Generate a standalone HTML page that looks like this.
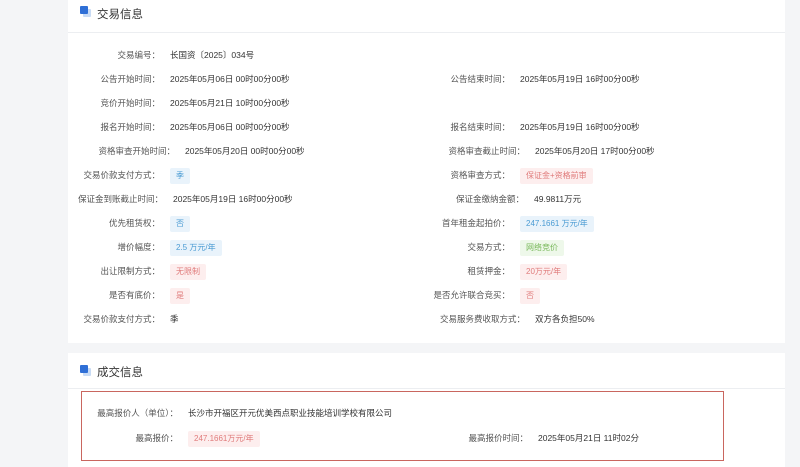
<!DOCTYPE html>
<html><head><meta charset="utf-8"><style>
body{margin:0;width:800px;height:467px;background:#f4f5f7;position:relative;overflow:hidden;font-family:"Liberation Sans","Noto Sans CJK SC",sans-serif;font-size:8.5px;color:#333}
.card{position:absolute;left:68px;width:717px;background:#fff}
.hd{position:absolute;left:0;right:0;border-bottom:1px solid #eceef1}
.ic{position:absolute;width:8px;height:8px;background:#2f6fd6;border-radius:1px;box-shadow:3px 3px 0 #c8dbf5}
.tt{position:absolute;font-size:11.5px;color:#333}
.l,.v{position:absolute;line-height:16px;white-space:nowrap}
.l{text-align:right;color:#555}
.tag{display:inline-block;padding:0 6px;line-height:16px;border-radius:2px;font-size:8px}
.b{background:#e9f3fb;color:#4a9bd3}.r{background:#fdeeee;color:#e07b7b}.g{background:#eef8ea;color:#78b85a}
</style></head><body>
<div class="card" style="top:0;height:343px">
<div class="hd" style="top:0;height:32px"></div>
<div class="ic" style="left:12px;top:6px"></div>
<div class="tt" style="left:29px;top:6px">交易信息</div>
</div>
<div class="card" style="top:353px;height:114px">
<div class="hd" style="top:0;height:35px"></div>
<div class="ic" style="left:12px;top:12px"></div>
<div class="tt" style="left:29px;top:11px">成交信息</div>
</div>
<div style="position:absolute;left:81px;top:391px;width:641px;height:68px;border:1.5px solid #c9665f"></div>

<div class="l" style="right:640px;top:47px">交易编号：</div><div class="v" style="left:170px;top:47px">长国资〔2025〕034号</div>
<div class="l" style="right:640px;top:71px">公告开始时间：</div><div class="v" style="left:170px;top:71px">2025年05月06日 00时00分00秒</div>
<div class="l" style="right:290px;top:71px">公告结束时间：</div><div class="v" style="left:520px;top:71px">2025年05月19日 16时00分00秒</div>
<div class="l" style="right:640px;top:95px">竞价开始时间：</div><div class="v" style="left:170px;top:95px">2025年05月21日 10时00分00秒</div>
<div class="l" style="right:640px;top:119px">报名开始时间：</div><div class="v" style="left:170px;top:119px">2025年05月06日 00时00分00秒</div>
<div class="l" style="right:290px;top:119px">报名结束时间：</div><div class="v" style="left:520px;top:119px">2025年05月19日 16时00分00秒</div>
<div class="l" style="right:625px;top:143px">资格审查开始时间：</div><div class="v" style="left:185px;top:143px">2025年05月20日 00时00分00秒</div>
<div class="l" style="right:275px;top:143px">资格审查截止时间：</div><div class="v" style="left:535px;top:143px">2025年05月20日 17时00分00秒</div>
<div class="l" style="right:640px;top:167px">交易价款支付方式：</div><div class="v" style="left:170px;top:167px"><span class="tag b">季</span></div>
<div class="l" style="right:290px;top:167px">资格审查方式：</div><div class="v" style="left:520px;top:167px"><span class="tag r">保证金+资格前审</span></div>
<div class="l" style="right:637px;top:191px">保证金到账截止时间：</div><div class="v" style="left:173px;top:191px">2025年05月19日 16时00分00秒</div>
<div class="l" style="right:276px;top:191px">保证金缴纳金额：</div><div class="v" style="left:534px;top:191px">49.9811万元</div>
<div class="l" style="right:640px;top:215px">优先租赁权：</div><div class="v" style="left:170px;top:215px"><span class="tag b">否</span></div>
<div class="l" style="right:290px;top:215px">首年租金起拍价：</div><div class="v" style="left:520px;top:215px"><span class="tag b">247.1661 万元/年</span></div>
<div class="l" style="right:640px;top:239px">增价幅度：</div><div class="v" style="left:170px;top:239px"><span class="tag b">2.5 万元/年</span></div>
<div class="l" style="right:290px;top:239px">交易方式：</div><div class="v" style="left:520px;top:239px"><span class="tag g">网络竞价</span></div>
<div class="l" style="right:640px;top:263px">出让限制方式：</div><div class="v" style="left:170px;top:263px"><span class="tag r">无限制</span></div>
<div class="l" style="right:290px;top:263px">租赁押金：</div><div class="v" style="left:520px;top:263px"><span class="tag r">20万元/年</span></div>
<div class="l" style="right:640px;top:287px">是否有底价：</div><div class="v" style="left:170px;top:287px"><span class="tag r">是</span></div>
<div class="l" style="right:290px;top:287px">是否允许联合竞买：</div><div class="v" style="left:520px;top:287px"><span class="tag r">否</span></div>
<div class="l" style="right:640px;top:311px">交易价款支付方式：</div><div class="v" style="left:170px;top:311px">季</div>
<div class="l" style="right:275px;top:311px">交易服务费收取方式：</div><div class="v" style="left:535px;top:311px">双方各负担50%</div>

<div class="l" style="right:622px;top:405px">最高报价人（单位）：</div><div class="v" style="left:188px;top:405px">长沙市开福区开元优美西点职业技能培训学校有限公司</div>
<div class="l" style="right:622px;top:430px">最高报价：</div><div class="v" style="left:188px;top:430px"><span class="tag r">247.1661万元/年</span></div>
<div class="l" style="right:272px;top:430px">最高报价时间：</div><div class="v" style="left:538px;top:430px">2025年05月21日 11时02分</div>
</body></html>
